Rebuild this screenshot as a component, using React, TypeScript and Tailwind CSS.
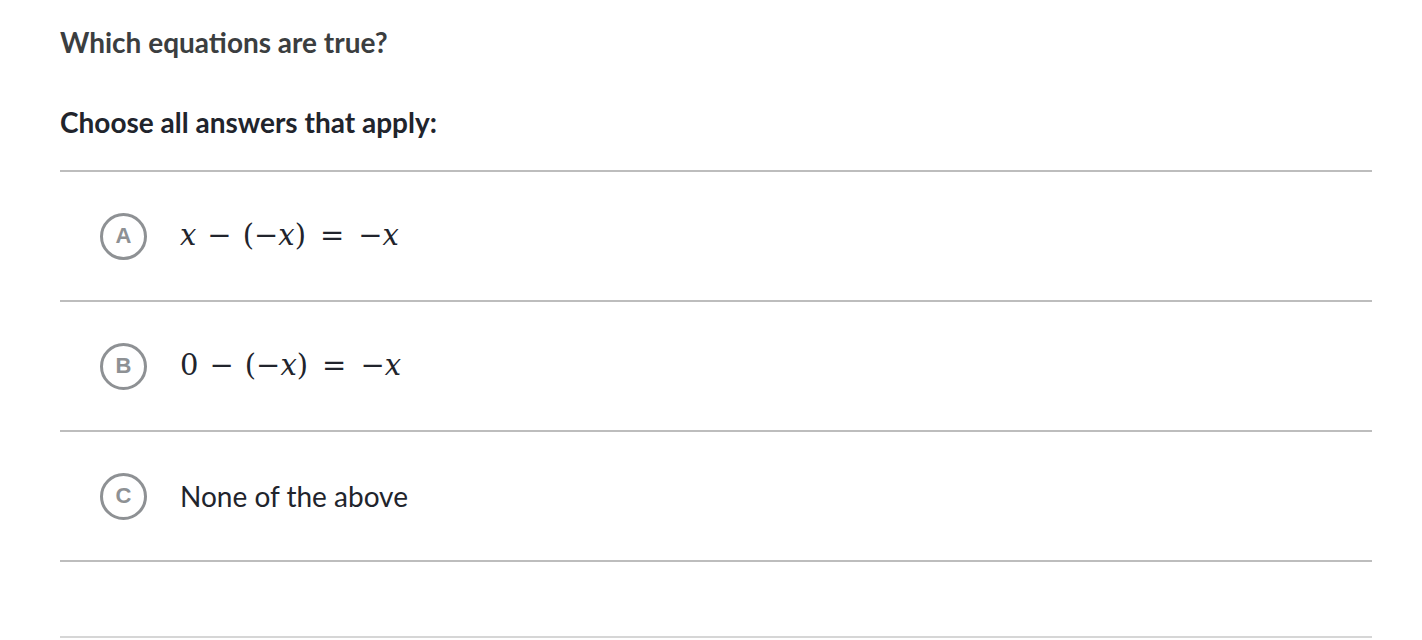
import React from 'react'

function Bubble({ letter }: { letter: string }) {
  return (
    <div className="w-[47px] h-[47px] rounded-full border-[3px] border-[#8e9194] flex items-center justify-center shrink-0">
      <span className="text-[22px] font-bold text-[#8e9194] leading-none font-['Liberation_Sans',Arial,sans-serif]">{letter}</span>
    </div>
  )
}

function X() {
  return <span className="italic font-['DejaVu_Serif',serif]">x</span>
}

function Bin({ c }: { c: string }) {
  return <span className="mx-[11px]">{c}</span>
}

function Rel({ c }: { c: string }) {
  return <span className="mx-[14px]">{c}</span>
}

const MATH = "text-[29px] text-[#21242c] font-['DejaVu_Serif',serif] font-light whitespace-nowrap"

function MathA() {
  return (
    <span className={MATH}>
      <X /><Bin c="−" />(−<X />)<Rel c="=" />−<X />
    </span>
  )
}

function MathB() {
  return (
    <span className={MATH}>
      0<Bin c="−" />(−<X />)<Rel c="=" />−<X />
    </span>
  )
}

const CHOICES: { letter: string; content: React.ReactNode }[] = [
  { letter: 'A', content: <MathA /> },
  { letter: 'B', content: <MathB /> },
  { letter: 'C', content: <span className="text-[28px] text-[#21242c]">None of the above</span> },
]

export default function App() {
  return (
    <div className="min-h-[640px] bg-white font-['Lato','Open_Sans',sans-serif] px-[60px] pt-[24px] w-[1432px]">
      <h2 className="text-[28px] font-bold text-[#3b3e40] leading-[36px]">Which equations are true?</h2>
      <p className="mt-[44px] text-[28px] font-bold text-[#21242c] leading-[36px]">Choose all answers that apply:</p>

      <div className="mt-[30px] w-[1312px] border-t-2 border-[#bdbdbd]">
        {CHOICES.map(ch => (
          <div key={ch.letter} className="h-[130px] border-b-2 border-[#bdbdbd] flex items-center gap-[33px] pl-[40px]">
            <Bubble letter={ch.letter} />
            {ch.content}
          </div>
        ))}
        <div className="h-[76px] border-b-2 border-[#d6d6d6]" />
      </div>
    </div>
  )
}
